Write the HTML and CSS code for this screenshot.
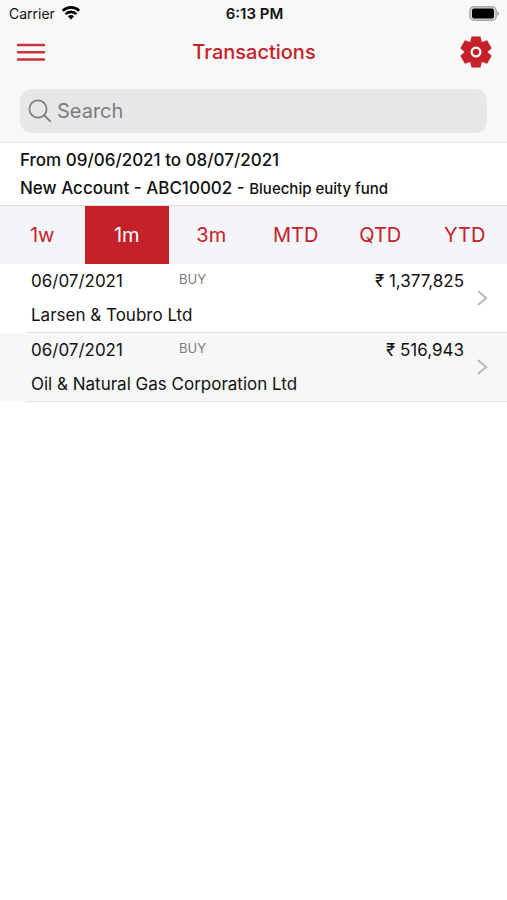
FILE: index.html
```html
<!DOCTYPE html>
<html lang="en">
<head>
<meta charset="utf-8">
<meta name="viewport" content="width=device-width, initial-scale=1">
<title>Transactions</title>
<link rel="stylesheet" href="styles.css">
</head>
<body>
<header class="top">
  <div class="status">
    <div class="carrier">
      <span>Carrier</span>
      <svg class="wifi" width="18" height="14" viewBox="0 0 18 14" aria-hidden="true">
        <g fill="none" stroke="#000" stroke-width="2.6">
          <path d="M.8 4.8a11.6 11.6 0 0 1 16.4 0"/>
          <path d="M3.6 8.1a7.6 7.6 0 0 1 10.8 0"/>
        </g>
        <path d="M6 10.5a4.4 4.4 0 0 1 6 0L9 13.5z"/>
      </svg>
    </div>
    <span class="clock">6:13 PM</span>
    <svg class="battery" width="31" height="15" viewBox="0 0 31 15" aria-hidden="true">
      <rect x=".8" y=".8" width="26.4" height="13.4" rx="4" fill="#d8d8d8" stroke="#aaa" stroke-width="1.4"/>
      <rect x="3" y="2.5" width="22" height="10" rx="2"/>
      <path d="M28.3 5.2c2.4.8 2.4 3.8 0 4.6z" fill="#aaa"/>
    </svg>
  </div>
  <div class="navbar">
    <button class="icon-button" type="button" aria-label="Menu">
      <svg width="30" height="20" viewBox="0 0 30 20">
        <path d="M2 3h26M2 10.3h26M2 17.5h26" stroke="#c8323a" stroke-width="2.4" stroke-linecap="round"/>
      </svg>
    </button>
    <h1 class="title">Transactions</h1>
    <button class="icon-button end" type="button" aria-label="Settings">
      <svg width="32" height="32" viewBox="-16 -16 32 32">
        <g fill="#c6202a" stroke="#c6202a" stroke-width="1.6" stroke-linejoin="round">
          <circle r="10.8"/>
          <path id="tooth" d="M-4.8-10L-4-14.7H4L4.8-10V10L4 14.7H-4L-4.8 10z"/>
          <use href="#tooth" transform="rotate(60)"/>
          <use href="#tooth" transform="rotate(120)"/>
        </g>
        <circle r="4.4" fill="none" stroke="#fff" stroke-width="2.2"/>
      </svg>
    </button>
  </div>
  <label class="search">
    <svg width="24" height="24" viewBox="0 0 24 24" aria-hidden="true">
      <g fill="none" stroke="#7c7c7f" stroke-width="1.7" stroke-linecap="round">
        <circle cx="10" cy="10" r="8.6"/>
        <path d="M16.3 16.3l6 6"/>
      </g>
    </svg>
    <input type="search" placeholder="Search" aria-label="Search">
  </label>
</header>
<main>
  <section class="summary">
    <p>From 09/06/2021 to 08/07/2021</p>
    <p>New Account - ABC10002 - <span class="fund">Bluechip euity fund</span></p>
  </section>
  <nav class="periods" aria-label="Period">
    <button type="button">1w</button>
    <button type="button" class="active" aria-pressed="true">1m</button>
    <button type="button">3m</button>
    <button type="button">MTD</button>
    <button type="button">QTD</button>
    <button type="button">YTD</button>
  </nav>
  <ul class="list">
    <li>
      <a class="row" href="#larsen">
        <span class="details">
          <span class="date">06/07/2021</span>
          <span class="kind">BUY</span>
          <span class="amount">₹ 1,377,825</span>
          <span class="name">Larsen &amp; Toubro Ltd</span>
        </span>
        <svg class="chevron" width="12" height="18" viewBox="0 0 12 18" aria-hidden="true"><path d="M2 2l8 7-8 7" fill="none" stroke="#bcbcbe" stroke-width="2.2"/></svg>
      </a>
    </li>
    <li>
      <a class="row" href="#ongc">
        <span class="details">
          <span class="date">06/07/2021</span>
          <span class="kind">BUY</span>
          <span class="amount">₹ 516,943</span>
          <span class="name">Oil &amp; Natural Gas Corporation Ltd</span>
        </span>
        <svg class="chevron" width="12" height="18" viewBox="0 0 12 18" aria-hidden="true"><path d="M2 2l8 7-8 7" fill="none" stroke="#bcbcbe" stroke-width="2.2"/></svg>
      </a>
    </li>
  </ul>
</main>
</body>
</html>
```
FILE: styles.css
```css
* {
  box-sizing: border-box;
}

body {
  margin: 0;
  background: #fff;
  color: #111;
  font-family: Inter, "Liberation Sans", sans-serif;
  font-size: 17px;
}

h1, p, ul {
  margin: 0;
  padding: 0;
}

button {
  padding: 0;
  border: 0;
  background: none;
  font: inherit;
}

.top {
  background: #f8f8f8;
  border-bottom: 1px solid #e6e6e7;
}

.status {
  display: grid;
  grid-template-columns: 1fr auto 1fr;
  align-items: center;
  height: 26px;
  padding: 0 7px 0 9px;
  font-size: 14px;
}

.carrier {
  display: flex;
  align-items: center;
  gap: 7px;
}

.clock {
  font-size: 15px;
  font-weight: 600;
}

.battery {
  justify-self: end;
}

.navbar {
  display: grid;
  grid-template-columns: 1fr auto 1fr;
  align-items: center;
  height: 52px;
  padding: 0 15px 0 16px;
}

.icon-button {
  justify-self: start;
  display: flex;
}

.icon-button.end {
  justify-self: end;
}

.title {
  color: #c6202a;
  font-size: 20px;
  font-weight: 500;
  line-height: 24px;
}

.search {
  display: flex;
  align-items: center;
  gap: 5px;
  height: 44px;
  margin: 11px 20px 9px;
  padding: 0 8px;
  border-radius: 12px;
  background: #e7e7e7;
}

.search input {
  flex: 1;
  min-width: 0;
  padding: 0;
  border: 0;
  outline: 0;
  background: none;
  color: #111;
  font: inherit;
  font-size: 20px;
}

.search input::placeholder {
  color: #7c7c7f;
}

.summary {
  padding: 3px 20px 2px;
  border-bottom: 1px solid #dcdcde;
  font-weight: 500;
  line-height: 28px;
}

.fund {
  font-size: 15px;
}

.periods {
  display: grid;
  grid-template-columns: repeat(6, 1fr);
  height: 58px;
  background: #f3f5f9;
}

.periods button {
  color: #c6202a;
  font-size: 20px;
}

.periods .active {
  background: #c6202a;
  color: #fff;
}

.list {
  list-style: none;
}

.list li:nth-child(even) {
  background: #f7f7f7;
}

.row {
  display: flex;
  align-items: center;
  gap: 12px;
  margin-left: 26px;
  padding: 0 19px 0 5px;
  border-bottom: 1px solid #e3e3e5;
  color: inherit;
  text-decoration: none;
}

.details {
  flex: 1;
  display: grid;
  grid-template-columns: 148px 1fr auto;
  line-height: 34px;
}

.kind {
  color: #7c7c7f;
  font-size: 13px;
  line-height: 30px;
}

.name {
  grid-column: 1 / -1;
}
```
